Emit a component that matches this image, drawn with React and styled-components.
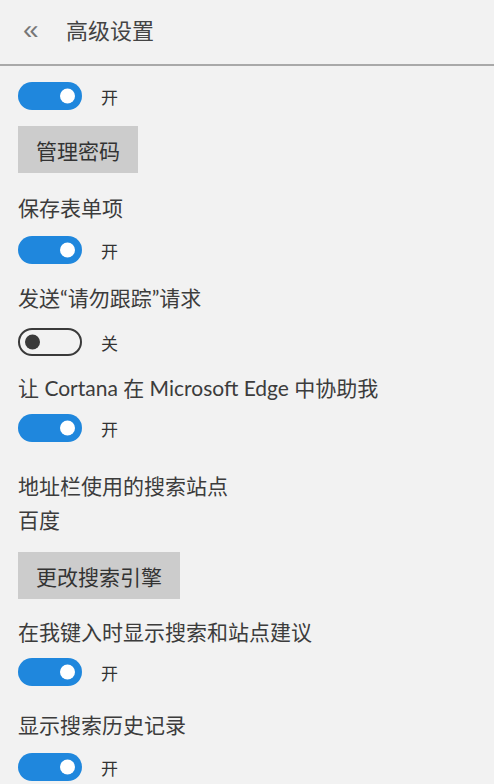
import React from "react"
import styled, { createGlobalStyle } from "styled-components"

const Global = createGlobalStyle`
	body {
		margin: 0;
		background: #f2f2f2;
		font-family: Lato, "Noto Sans CJK SC", sans-serif;
		color: #3c3c3c;
	}
`

const Page = styled.div`
	width: 494px;
	min-height: 784px;
	background: #f2f2f2;
	overflow: hidden;
`

const Header = styled.header`
	height: 58px;
	padding-bottom: 6px;
	display: flex;
	align-items: center;
	border-bottom: 2px solid #a9a9a9;
	padding-left: 23px;
	box-sizing: content-box;
`

const Back = styled.span`
	font-family: "Liberation Sans", sans-serif;
	font-size: 28px;
	color: #777;
	width: 43px;
	margin-top: 1px;
`

const Title = styled.h1`
	margin: 0;
	font-size: 22px;
	font-weight: normal;
	color: #444;
`

const Content = styled.div`
	padding: 16px 18px 0;
	display: flex;
	flex-direction: column;
	align-items: flex-start;
`

const Label = styled.div`
	font-size: 21px;
	line-height: 28px;
	margin-top: ${(p) => p.$top ?? 20}px;
	white-space: nowrap;
`

const ToggleRow = styled.div`
	display: flex;
	align-items: center;
	gap: 19px;
	margin-top: ${(p) => p.$top ?? 13}px;
`

const Track = styled.span`
	position: relative;
	width: 64px;
	height: 28px;
	border-radius: 14px;
	box-sizing: border-box;
	background: ${(p) => (p.$on ? "#1f87dd" : "transparent")};
	border: ${(p) => (p.$on ? "none" : "2px solid #3a3a3a")};
`

const Knob = styled.span`
	position: absolute;
	top: 50%;
	width: 15px;
	height: 15px;
	border-radius: 50%;
	transform: translateY(-50%);
	background: ${(p) => (p.$on ? "#fff" : "#3a3a3a")};
	${(p) => (p.$on ? "right: 7px;" : "left: 5px;")}
`

const State = styled.span`
	font-size: 17px;
	color: #333;
`

const Button = styled.button`
	margin-top: ${(p) => p.$top ?? 16}px;
	background: #cccccc;
	border: none;
	height: 47px;
	padding: 0 18px;
	font-family: inherit;
	font-size: 21px;
	color: #333;
`

const Toggle = ({ on = true, top }) => (
	<ToggleRow $top={top}>
		<Track $on={on}>
			<Knob $on={on} />
		</Track>
		<State>{on ? "开" : "关"}</State>
	</ToggleRow>
)

export default function App() {
	return (
		<Page>
			<Global />
			<Header>
				<Back>«</Back>
				<Title>高级设置</Title>
			</Header>
			<Content>
				<Toggle top={0} />
				<Button>管理密码</Button>
				<Label $top={21}>保存表单项</Label>
				<Toggle top={14} />
				<Label>发送“请勿跟踪”请求</Label>
				<Toggle on={false} top={16} />
				<Label $top={18}>让 Cortana 在 Microsoft Edge 中协助我</Label>
				<Toggle top={12} />
				<Label $top={30}>地址栏使用的搜索站点</Label>
				<Label $top={6}>百度</Label>
				<Button $top={18}>更改搜索引擎</Button>
				<Label $top={19}>在我键入时显示搜索和站点建议</Label>
				<Toggle top={12} />
				<Label $top={25}>显示搜索历史记录</Label>
				<Toggle top={14} />
			</Content>
		</Page>
	)
}
